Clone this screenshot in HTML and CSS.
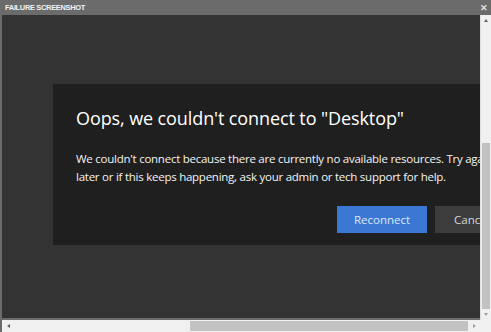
FILE: index.html
```html
<!DOCTYPE html>
<html>
<head>
<meta charset="utf-8">
<link rel="stylesheet" href="styles.css">
</head>
<body>
<div class="window">
  <div class="titlebar">
    <span class="title">FAILURE SCREENSHOT</span>
    <span class="close">&#x2715;</span>
  </div>
  <div class="frame">
    <div class="viewport">
      <div class="dialog">
        <h1 class="dlg-title">Oops, we couldn't connect to "Desktop"</h1>
        <p class="dlg-text">We couldn't connect because there are currently no available resources. Try again<br>later or if this keeps happening, ask your admin or tech support for help.</p>
        <div class="actions">
          <button class="btn primary">Reconnect</button>
          <button class="btn secondary">Cancel</button>
        </div>
      </div>
    </div>
    <div class="vscroll">
      <div class="arrow up"></div>
      <div class="vtrack"><div class="vthumb"></div></div>
      <div class="arrow down"></div>
    </div>
    <div class="hscroll">
      <div class="harrow left"></div>
      <div class="htrack"><div class="hthumb"></div></div>
      <div class="harrow right"></div>
    </div>
    <div class="corner"></div>
  </div>
</div>
</body>
</html>
```
FILE: styles.css
```css
* { box-sizing: border-box; }
html, body { margin: 0; padding: 0; }
body { width: 491px; height: 332px; overflow: hidden; background: #6b6b6b; font-family: "Open Sans", "Noto Sans", sans-serif; }
.window { width: 491px; height: 332px; display: flex; flex-direction: column; background: #6b6b6b; }
.titlebar { height: 15px; display: flex; align-items: center; justify-content: space-between; padding: 0 3px 0 5px; flex: none; }
.title { color: #f2f2f2; font-family: "Liberation Sans", Arial, sans-serif; font-weight: bold; font-size: 7.5px; letter-spacing: -0.35px; }
.close { color: #e0e0e0; font-size: 9px; font-weight: bold; line-height: 1; }
.frame { flex: 1; display: grid; grid-template-columns: 478px 11px; grid-template-rows: 305px 12px; margin-left: 2px; min-height: 0; background: #f0f0f0; }
.viewport { background: #333333; overflow: hidden; padding: 69px 0 0 51px; border-bottom: 2px solid #6b6b6b; }
.dialog { width: 480px; height: 161px; background: #1f1f1f; padding: 22px 0 0 23px; color: #fff; }
.dlg-title { margin: 0; font-family: "Open Sans", sans-serif; font-weight: normal; font-size: 18px; line-height: 24px; letter-spacing: -0.1px; white-space: nowrap; }
.dlg-text { margin: 20px 0 0 0; font-size: 11.5px; line-height: 18px; color: #f4f4f4; letter-spacing: -0.25px; white-space: nowrap; }
.actions { display: flex; gap: 8px; margin: 20px 0 0 261px; }
.btn { height: 27px; border: none; font-family: inherit; font-size: 11.5px; color: #fff; padding: 0; flex: none; }
.primary { width: 90px; background: #3a78d4; color: #dfe9f8; }
.secondary { width: 90px; background: #3c3c3c; text-align: left; padding-left: 19px; color: #d8d8d8; }
.vscroll { grid-column: 2; grid-row: 1; background: #f0f0f0; display: flex; flex-direction: column; border-left: 1px solid #e0e0e0; }
.arrow { height: 11px; flex: none; display: flex; align-items: center; justify-content: center; }
.arrow::after { content: ""; width: 0; height: 0; border-left: 2px solid transparent; border-right: 2px solid transparent; }
.arrow.up::after { border-bottom: 3px solid #606060; }
.arrow.down::after { border-top: 3px solid #a0a0a0; }
.vtrack { flex: 1; display: flex; flex-direction: column; }
.vthumb { margin-top: 117px; flex: 1; background: #c2c2c2; margin-left: 1px; margin-right: 1px; }
.hscroll { grid-column: 1; grid-row: 2; background: #f0f0f0; display: flex; }
.harrow { width: 12px; flex: none; display: flex; align-items: center; justify-content: center; }
.harrow::after { content: ""; width: 0; height: 0; border-top: 2px solid transparent; border-bottom: 2px solid transparent; }
.harrow.left::after { border-right: 3px solid #606060; }
.harrow.right::after { border-left: 3px solid #a0a0a0; }
.htrack { flex: 1; display: flex; }
.hthumb { margin-left: 176px; flex: 1; background: #c2c2c2; margin-top: 1px; margin-bottom: 1px; }
.corner { grid-column: 2; grid-row: 2; background: #f0f0f0; }
```
